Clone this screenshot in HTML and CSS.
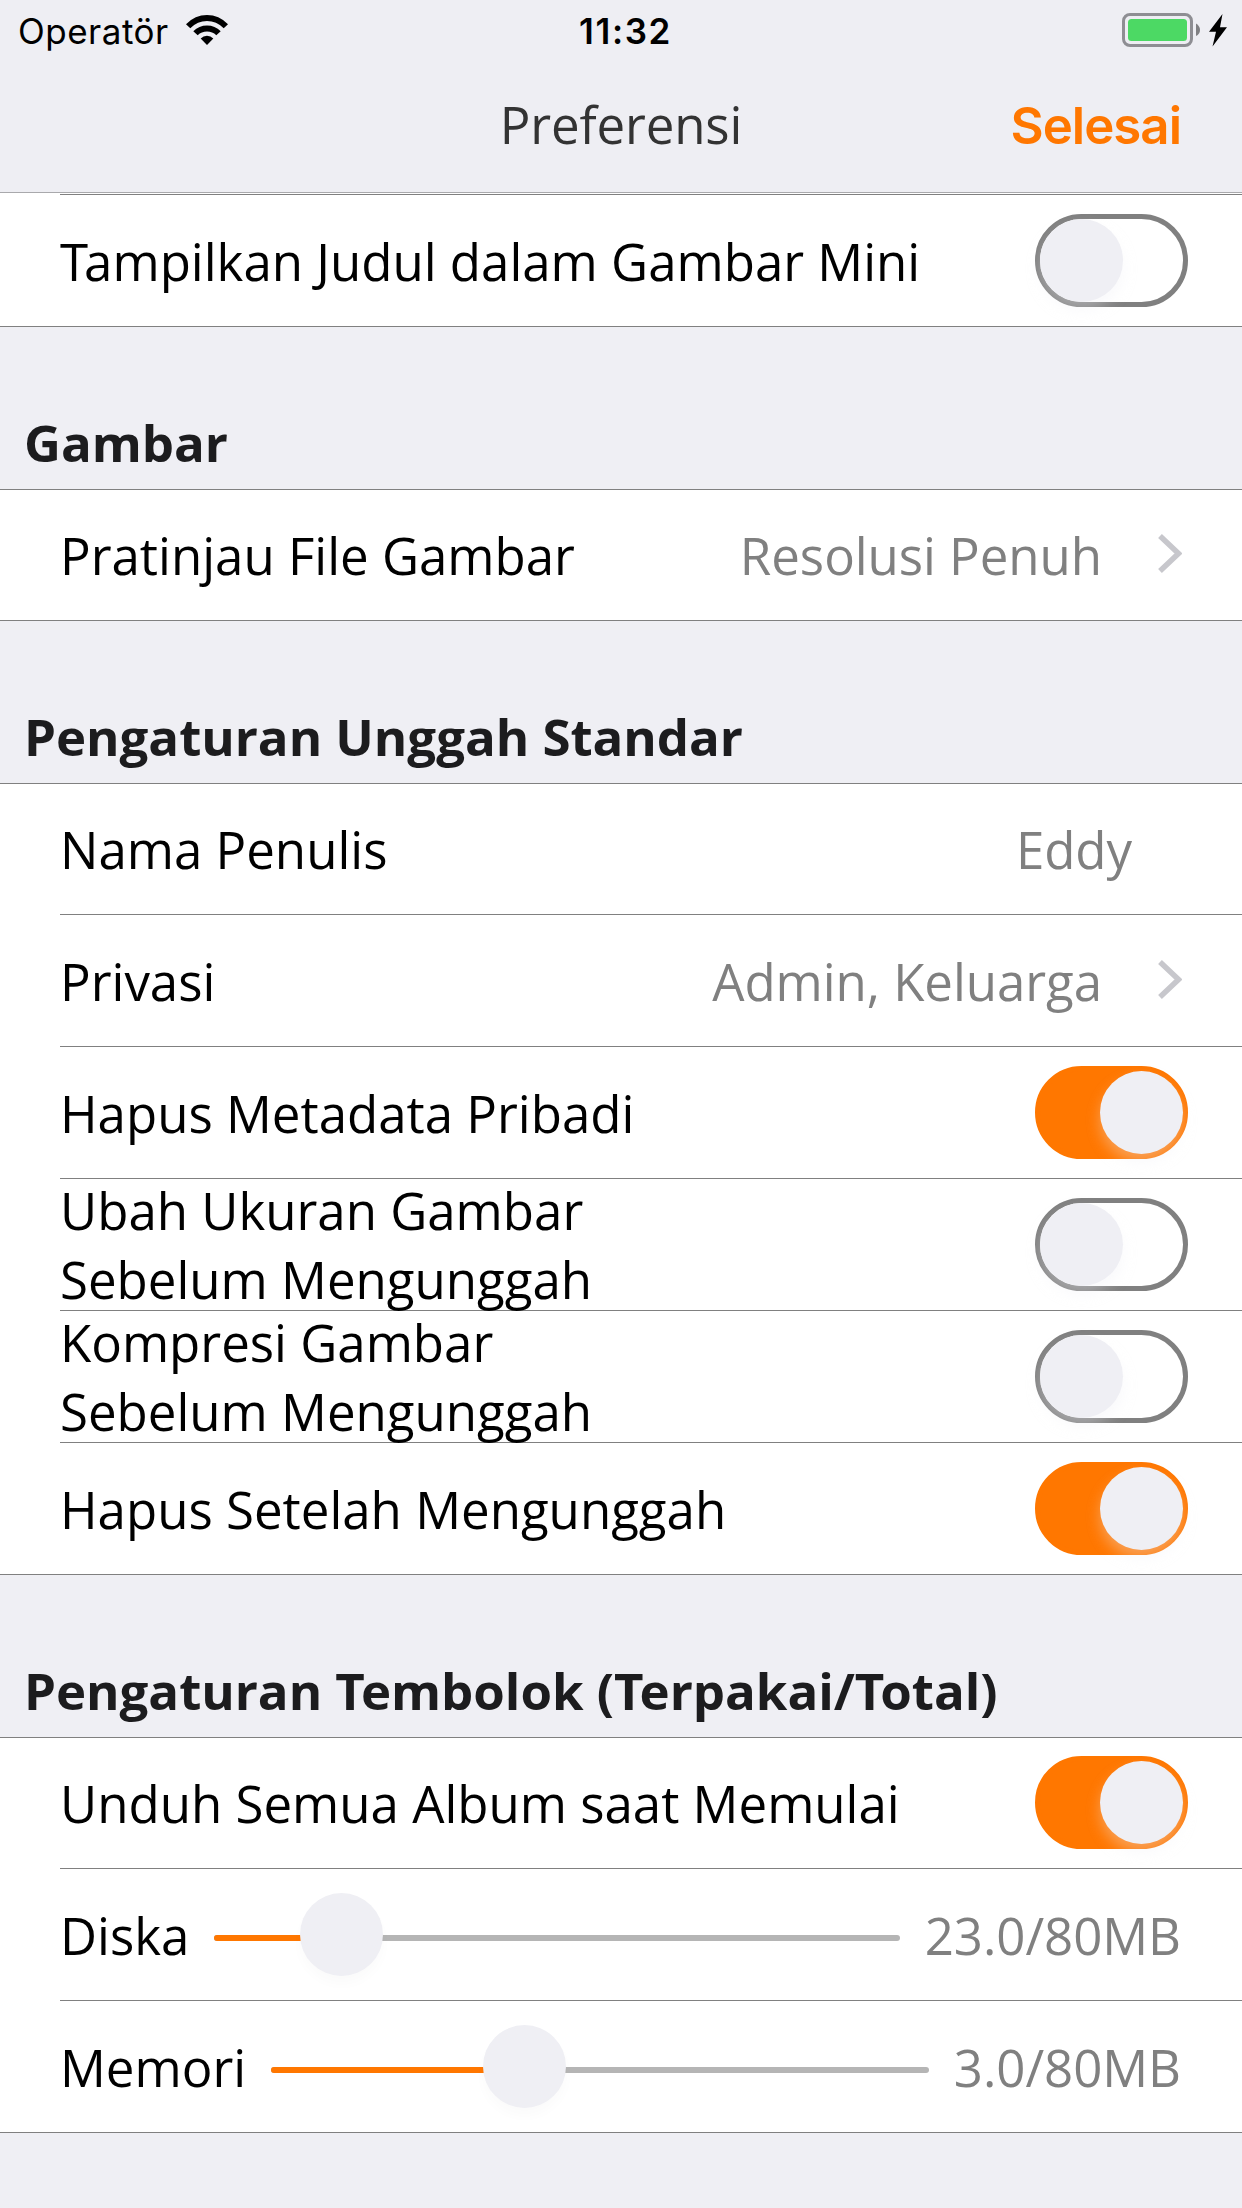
FILE: index.html
```html
<!DOCTYPE html>
<html lang="id">
<head>
<meta charset="utf-8">
<title>Preferensi</title>
<link rel="stylesheet" href="styles.css">
</head>
<body>
<header class="topbar">
  <div class="status">
    <div class="status-left">
      <span class="carrier">Operatör</span>
      <svg class="wifi" width="42" height="30" viewBox="0 0 42 30">
        <path d="M0 9.2Q9 0 21 0T42 9.2L37.7 13.2Q30.500 6 21 6T4.300 13.200Z"/>
        <path d="M7.300 16.300Q13 10.500 21 10.500T34.700 16.300L30.300 20.200Q26.500 16.500 21 16.500T11.700 20.200Z"/>
        <path d="M14.700 23.500Q17.300 20.800 21 20.800T27.300 23.500L21 30Z"/>
      </svg>
    </div>
    <span class="clock">11:32</span>
    <div class="status-right">
      <svg class="battery" width="106" height="34" viewBox="0 0 106 34">
        <rect x="1.500" y="1.500" width="68" height="31" rx="6.500" fill="none" stroke="#8e8e93" stroke-width="3"/>
        <rect x="6" y="6" width="59" height="22" rx="3.500" fill="#4cd964"/>
        <path d="M74 10.500Q78 13 78 17T74 23Z" fill="#808083"/>
        <path d="M100.500 1L87 18.800H94L90.500 33.500L105 14.200H98Z" fill="#000"/>
      </svg>
    </div>
  </div>
  <nav class="navbar">
    <h1 class="title">Preferensi</h1>
    <a class="done">Selesai</a>
  </nav>
</header>

<main>
  <section class="group group-cut">
    <div class="row">
      <span class="label"><span class="kern">T</span>ampilkan Judul dalam Gambar Mini</span>
      <span class="switch"><i class="knob"></i></span>
    </div>
  </section>

  <h2 class="heading">Gambar</h2>
  <section class="group">
    <div class="row">
      <span class="label">Pratinjau File Gambar</span>
      <span class="value value-link">Resolusi Penuh</span>
      <svg class="chevron" width="24" height="39" viewBox="0 0 24 39"><path d="M2 2L20.500 19.500L2 37"/></svg>
    </div>
  </section>

  <h2 class="heading">Pengaturan Unggah Standar</h2>
  <section class="group">
    <div class="row">
      <span class="label">Nama Penulis</span>
      <span class="value value-field">Eddy</span>
    </div>
    <div class="row">
      <span class="label">Privasi</span>
      <span class="value value-link">Admin, Keluarga</span>
      <svg class="chevron" width="24" height="39" viewBox="0 0 24 39"><path d="M2 2L20.500 19.500L2 37"/></svg>
    </div>
    <div class="row">
      <span class="label">Hapus Metadata Pribadi</span>
      <span class="switch on"><i class="knob"></i></span>
    </div>
    <div class="row">
      <span class="label two-line">Ubah Ukuran Gambar<br>Sebelum Mengunggah</span>
      <span class="switch"><i class="knob"></i></span>
    </div>
    <div class="row">
      <span class="label two-line">Kompresi Gambar<br>Sebelum Mengunggah</span>
      <span class="switch"><i class="knob"></i></span>
    </div>
    <div class="row">
      <span class="label">Hapus Setelah Mengunggah</span>
      <span class="switch on"><i class="knob"></i></span>
    </div>
  </section>

  <h2 class="heading">Pengaturan <span class="kern">T</span>embolok (<span class="kern">T</span>erpakai/<span class="kern">T</span>otal)</h2>
  <section class="group">
    <div class="row">
      <span class="label">Unduh Semua Album saat Memulai</span>
      <span class="switch on"><i class="knob"></i></span>
    </div>
    <div class="row">
      <span class="label">Diska</span>
      <span class="slider"><i class="fill" style="width:18.500%"></i><i class="thumb" style="left:12.500%"></i></span>
      <span class="value">23.0/80MB</span>
    </div>
    <div class="row">
      <span class="label">Memori</span>
      <span class="slider"><i class="fill" style="width:38%"></i><i class="thumb" style="left:32.150%"></i></span>
      <span class="value">3.0/80MB</span>
    </div>
  </section>
</main>
</body>
</html>
```
FILE: styles.css
```css
* {
  box-sizing: border-box;
}

body {
  margin: 0;
  width: 1242px;
  min-height: 2208px;
  background: #efeff4;
  color: #000;
  font-family: "Open Sans", "Noto Sans", sans-serif;
  font-size: 51px;
  line-height: 69px;
  white-space: nowrap;
}

.topbar {
  height: 193px;
  background: #eeeef3;
  border-bottom: 1px solid #a9a9ac;
}

.status {
  display: grid;
  grid-template-columns: 1fr auto 1fr;
  height: 60px;
  padding: 0 14px 0 18px;
  font-family: Inter, "Liberation Sans", sans-serif;
  font-size: 35px;
  line-height: 62px;
}

.status-left {
  display: flex;
  align-items: flex-start;
  gap: 17px;
}

.carrier {
  letter-spacing: 0.5px;
}

.wifi {
  margin-top: 15px;
}

.clock {
  padding-left: 5px;
  font-weight: 600;
  letter-spacing: 1.6px;
}

.status-right {
  display: flex;
  justify-content: flex-end;
}

.battery {
  margin-top: 13px;
}

.navbar {
  display: grid;
  grid-template-columns: 1fr auto 1fr;
  height: 132px;
  padding: 0 60px;
}

.title {
  grid-column: 2;
  margin: 30px 0 0;
  font-size: 51px;
  font-weight: 400;
  letter-spacing: -0.15px;
  color: #333;
}

.done {
  justify-self: end;
  margin-top: 31px;
  margin-right: 1px;
  font-family: Inter, "Liberation Sans", sans-serif;
  font-weight: 600;
  letter-spacing: -1px;
  color: #ff7700;
}

.group {
  background: #fff;
  border-top: 1px solid #808080;
  border-bottom: 1px solid #808080;
}

.row {
  display: flex;
  align-items: flex-end;
  height: 131px;
  margin-left: 60px;
  padding-right: 60px;
}

.row:first-child {
  height: 130px;
}

.row + .row {
  height: 132px;
  border-top: 1px solid #808080;
}

.group-cut {
  padding-top: 1px;
  border-top: 0;
}

.group-cut .row:first-child {
  height: 132px;
  border-top: 1px solid #808080;
}

.label {
  margin-bottom: 30px;
}

.kern {
  letter-spacing: -4px;
}

.two-line {
  margin-bottom: -4px;
}

.value {
  margin-right: 1px;
  margin-bottom: 30px;
  margin-left: auto;
  letter-spacing: -0.05px;
  color: #808080;
}

.value-link {
  margin-right: 56px;
}

.value-field {
  margin-right: 50px;
}

.chevron {
  margin-bottom: 47px;
  fill: none;
  stroke: #c7c7cc;
  stroke-width: 5.500;
}

.switch {
  display: flex;
  width: 153px;
  height: 93px;
  margin: 0 -6px 19px auto;
  border: 5px solid #808080;
  border-radius: 47px;
}

.switch.on {
  justify-content: flex-end;
  background: #ff7700;
  border-color: #ff7700;
}

.knob {
  width: 83px;
  height: 83px;
  border-radius: 50%;
  background: #efeff4;
  box-shadow: 0 8px 14px rgba(239, 239, 244, 0.35);
}

.slider {
  position: relative;
  flex: 1;
  height: 6px;
  margin: 0 25px 59px 25px;
  border-radius: 3px;
  background: #b5b5b5;
}

.fill {
  display: block;
  height: 6px;
  border-radius: 3px;
  background: #ff7700;
}

.thumb {
  position: absolute;
  top: -42px;
  width: 83px;
  height: 83px;
  border-radius: 50%;
  background: #efeff4;
  box-shadow: 0 8px 12px rgba(0, 0, 0, 0.02);
}

.heading {
  height: 162px;
  margin: 0;
  padding: 81px 0 0 24px;
  font-size: 51px;
  font-weight: 700;
  letter-spacing: -0.03px;
  color: #1c1c1e;
}
```
